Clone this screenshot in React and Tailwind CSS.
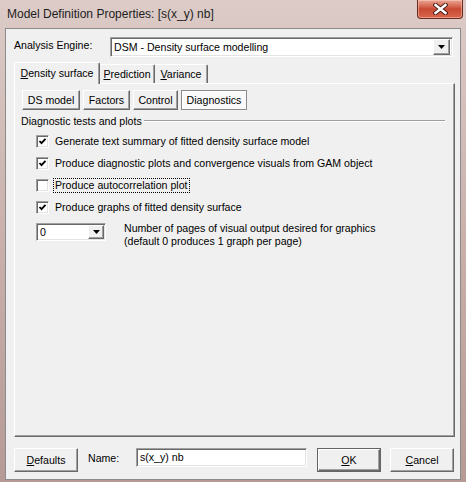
import React from 'react';

const raised =
  'border border-t-white border-l-white border-r-[#696969] border-b-[#696969] shadow-[inset_-1px_-1px_0_#a0a0a0] bg-[#f0f0f0]';
const sunken =
  'border border-t-[#a0a0a0] border-l-[#a0a0a0] border-r-white border-b-white shadow-[inset_1px_1px_0_#696969,inset_-1px_-1px_0_#e3e3e3] bg-white';

function Button({ children, className = '' }) {
  return (
    <div className={`${raised} flex items-center justify-center ${className}`}>{children}</div>
  );
}

function DropArrow({ className = '' }) {
  return (
    <div className={`${raised} flex items-center justify-center ${className}`}>
      <svg width="7" height="4" viewBox="0 0 7 4">
        <path d="M0 0h7L3.5 4z" fill="#000" />
      </svg>
    </div>
  );
}

function CheckBox({ checked }) {
  return (
    <div className={`${sunken} w-[13px] h-[13px] shrink-0 flex items-center justify-center`}>
      {checked && (
        <svg width="9" height="9" viewBox="0 0 9 9">
          <path d="M1.5 4l2 2.2L7.5 1.8" stroke="#000" strokeWidth="1.8" fill="none" />
        </svg>
      )}
    </div>
  );
}

const options = [
  { label: 'Generate text summary of fitted density surface model', checked: true },
  { label: 'Produce diagnostic plots and convergence visuals from GAM object', checked: true },
  { label: 'Produce autocorrelation plot', checked: false, focus: true },
  { label: 'Produce graphs of fitted density surface', checked: true },
];

export default function App() {
  return (
    <div className="w-[466px] h-[482px] overflow-hidden flex flex-col bg-gradient-to-b from-[#dccbc7] via-[#c9b0ab] to-[#b59a95] font-['Liberation_Sans',Arial,sans-serif] text-[10.6px] text-black">
      {/* Title bar */}
      <div className="h-[28px] flex items-start">
        <span className="flex-1 pl-[7px] pt-[7px] text-[12px] leading-[14px] text-[#1e1e1e] font-['Segoe_UI','Liberation_Sans',sans-serif]">
          Model Definition Properties: [s(x_y) nb]
        </span>
        <div className="mr-[3px] w-[46px] h-[19px] rounded-b-[4px] border border-t-0 border-[#6e2a20] bg-gradient-to-b from-[#e9a593] via-[#c94a33] to-[#d8674a] flex items-center justify-center shadow-[inset_0_0_0_1px_rgba(255,220,210,0.45)]">
          <svg width="15" height="12" viewBox="0 0 15 12">
            <path d="M2.5 2L12.5 10M12.5 2L2.5 10" stroke="#4a1d16" strokeWidth="4.4" strokeLinecap="square" />
            <path d="M2.5 2L12.5 10M12.5 2L2.5 10" stroke="#fff" strokeWidth="2.4" strokeLinecap="square" />
          </svg>
        </div>
      </div>

      {/* Client area */}
      <div className="mx-[5px] h-[452px] flex flex-col bg-[#f0f0f0] border border-[#8b8b8b] pl-[8px] pr-[5px] pt-[8px] pb-[7px]">
        {/* Analysis engine */}
        <div className="h-[20px] flex items-start">
          <span className="w-[96px] pt-[2px] leading-[13px]">Analysis Engine:</span>
          <div className={`${sunken} flex-1 mr-[2px] h-[20px] flex items-center pl-[3px] pr-[2px]`}>
            <span className="flex-1 leading-[13px]">DSM - Density surface modelling</span>
            <DropArrow className="w-[17px] h-[16px]" />
          </div>
        </div>

        {/* Tabs */}
        <div className="mt-[5px] h-[21px] flex items-end">
          <div className="relative z-10 -mb-[1px] w-[86px] h-[22px] bg-[#f0f0f0] border-l border-t border-r border-l-white border-t-white border-r-[#696969] rounded-tr-[2px] shadow-[inset_-1px_0_0_#a0a0a0] flex items-start justify-center pt-[4px] leading-[13px]">
            <span><span className="underline">D</span>ensity surface</span>
          </div>
          <div className="w-[55px] h-[19px] border-t border-r border-t-white border-r-[#696969] rounded-tr-[2px] shadow-[inset_-1px_0_0_#a0a0a0] flex items-start justify-center pt-[3px] leading-[13px]">
            <span><span className="underline">P</span>rediction</span>
          </div>
          <div className="w-[53px] h-[19px] border-t border-r border-t-white border-r-[#696969] rounded-tr-[2px] shadow-[inset_-1px_0_0_#a0a0a0] flex items-start justify-center pt-[3px] leading-[13px]">
            <span><span className="underline">V</span>ariance</span>
          </div>
        </div>

        {/* Tab panel */}
        <div className="flex-1 flex flex-col border border-t-white border-l-white border-r-[#696969] border-b-[#696969] shadow-[inset_-1px_-1px_0_#a0a0a0] pl-[7px] pt-[6px]">
          <div className="flex gap-[3px] h-[20px] leading-[13px]">
            <Button className="w-[58px]">DS model</Button>
            <Button className="w-[47px]">Factors</Button>
            <Button className="w-[45px]">Control</Button>
            <div className="w-[66px] border border-[#8a8a8a] shadow-[inset_1px_1px_0_#fff] bg-[#f9f9f9] flex items-center justify-center pt-[1px]">
              Diagnostics
            </div>
          </div>

          <div className="mt-[5px] -ml-[1px] mr-[9px] h-[12px] flex items-center leading-[12px]">
            <span className="pr-[2px]">Diagnostic tests and plots</span>
            <div className="flex-1 border-t border-t-[#a0a0a0] border-b border-b-white" />
          </div>

          <div className="mt-[6px] pl-[14px] flex flex-col gap-[6px]">
            {options.map((o) => (
              <div key={o.label} className="h-[16px] flex items-center gap-[5px]">
                <CheckBox checked={o.checked} />
                <span
                  className={`leading-[13px] px-[1px] ${o.focus ? 'outline outline-1 outline-dotted outline-black' : ''}`}
                >
                  {o.label}
                </span>
              </div>
            ))}
          </div>

          <div className="mt-[8px] pl-[14px] flex items-start gap-[18px]">
            <div className={`${sunken} w-[70px] h-[18px] flex items-center pl-[3px] pr-[1px]`}>
              <span className="flex-1 leading-[13px]">0</span>
              <DropArrow className="w-[16px] h-[14px]" />
            </div>
            <div className="leading-[13px] -mt-[1px]">
              <div>Number of pages of visual output desired for graphics</div>
              <div>(default 0 produces 1 graph per page)</div>
            </div>
          </div>
        </div>

        {/* Bottom row */}
        <div className="mt-[11px] h-[24px] flex items-start leading-[13px]">
          <Button className="w-[64px] h-[24px]">
            <span><span className="underline">D</span>efaults</span>
          </Button>
          <span className="ml-[10px] w-[48px] pt-[4px]">Name:</span>
          <div className={`${sunken} w-[171px] h-[19px] flex items-center pl-[3px]`}>s(x_y) nb</div>
          <div className="ml-[10px] w-[64px] h-[24px] border border-[#646464]">
            <Button className="w-full h-full">
              <span><span className="underline">O</span>K</span>
            </Button>
          </div>
          <Button className="ml-[9px] w-[64px] h-[24px]">
            <span><span className="underline">C</span>ancel</span>
          </Button>
        </div>
      </div>
    </div>
  );
}
